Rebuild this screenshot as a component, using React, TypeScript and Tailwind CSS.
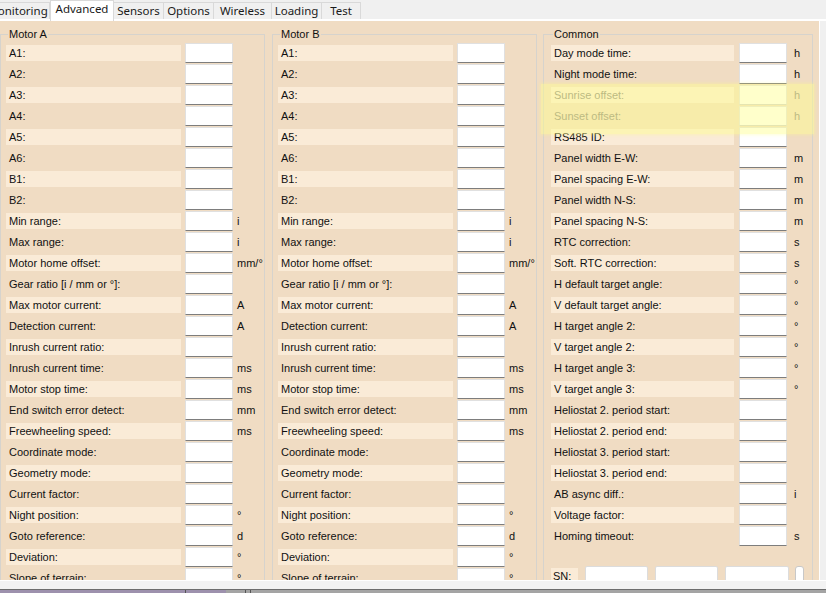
import React from 'react';

type Row = { label: string; unit?: string; disabled?: boolean };

const motorRows: Row[] = [
  { label: 'A1:' }, { label: 'A2:' }, { label: 'A3:' }, { label: 'A4:' },
  { label: 'A5:' }, { label: 'A6:' }, { label: 'B1:' }, { label: 'B2:' },
  { label: 'Min range:', unit: 'i' },
  { label: 'Max range:', unit: 'i' },
  { label: 'Motor home offset:', unit: 'mm/°' },
  { label: 'Gear ratio [i / mm or °]:' },
  { label: 'Max motor current:', unit: 'A' },
  { label: 'Detection current:', unit: 'A' },
  { label: 'Inrush current ratio:' },
  { label: 'Inrush current time:', unit: 'ms' },
  { label: 'Motor stop time:', unit: 'ms' },
  { label: 'End switch error detect:', unit: 'mm' },
  { label: 'Freewheeling speed:', unit: 'ms' },
  { label: 'Coordinate mode:' },
  { label: 'Geometry mode:' },
  { label: 'Current factor:' },
  { label: 'Night position:', unit: '°' },
  { label: 'Goto reference:', unit: 'd' },
  { label: 'Deviation:', unit: '°' },
  { label: 'Slope of terrain:', unit: '°' },
];

const commonRows: Row[] = [
  { label: 'Day mode time:', unit: 'h' },
  { label: 'Night mode time:', unit: 'h' },
  { label: 'Sunrise offset:', unit: 'h', disabled: true },
  { label: 'Sunset offset:', unit: 'h', disabled: true },
  { label: 'RS485 ID:' },
  { label: 'Panel width E-W:', unit: 'm' },
  { label: 'Panel spacing E-W:', unit: 'm' },
  { label: 'Panel width N-S:', unit: 'm' },
  { label: 'Panel spacing N-S:', unit: 'm' },
  { label: 'RTC correction:', unit: 's' },
  { label: 'Soft. RTC correction:', unit: 's' },
  { label: 'H default target angle:', unit: '°' },
  { label: 'V default target angle:', unit: '°' },
  { label: 'H target angle 2:', unit: '°' },
  { label: 'V target angle 2:', unit: '°' },
  { label: 'H target angle 3:', unit: '°' },
  { label: 'V target angle 3:', unit: '°' },
  { label: 'Heliostat 2. period start:' },
  { label: 'Heliostat 2. period end:' },
  { label: 'Heliostat 3. period start:' },
  { label: 'Heliostat 3. period end:' },
  { label: 'AB async diff.:', unit: 'i' },
  { label: 'Voltage factor:' },
  { label: 'Homing timeout:', unit: 's' },
];

const tabs = [
  { name: 'Monitoring', w: 'w-[64px]' },
  { name: 'Advanced', w: 'w-[64px]', active: true },
  { name: 'Sensors', w: 'w-[50px]' },
  { name: 'Options', w: 'w-[50px]' },
  { name: 'Wireless', w: 'w-[58px]' },
  { name: 'Loading', w: 'w-[50px]' },
  { name: 'Test', w: 'w-[39px]' },
];

const FieldRow = ({ row, index, wide }: { row: Row; index: number; wide?: boolean }) => (
  <div className="flex items-start h-[21px]">
    <div
      className={`mt-[2px] h-[16px] pl-[3px] leading-[16px] whitespace-nowrap ${wide ? 'w-[183px]' : 'w-[175px]'} ${
        index % 2 === 0 ? 'bg-[#faebd7]' : ''
      } ${row.disabled ? 'text-[#85827a]' : 'text-[#111]'}`}
    >
      {row.label}
    </div>
    <div
      className={`h-[20px] w-[48px] border ${wide ? 'ml-[5px]' : 'ml-[4px]'} ${
        row.disabled
          ? 'bg-white border-[#e2e2e2] border-b-[#cfcfcf]'
          : 'bg-white border-[#e0e0e0] border-b-[#7d7d7d]'
      }`}
    />
    {row.unit && (
      <span
        className={`leading-[20px] ${wide ? 'ml-[7px]' : 'ml-[4px]'} ${
          row.disabled ? 'text-[#85827a]' : 'text-[#111]'
        }`}
      >
        {row.unit}
      </span>
    )}
  </div>
);

const Group = ({
  title,
  rows,
  className,
  wide,
  children,
}: {
  title: string;
  rows: Row[];
  className: string;
  wide?: boolean;
  children?: React.ReactNode;
}) => (
  <fieldset className={`border border-[#d6d3cd] h-[620px] shrink-0 ${className}`}>
    <legend className={`px-[1px] leading-[13px] text-[#111] ${wide ? 'ml-[9px]' : 'ml-[7px]'}`}>{title}</legend>
    <div className={`flex flex-col mt-[2px] ${wide ? 'pl-[7px]' : 'pl-[5px]'}`}>
      {rows.map((r, i) => (
        <FieldRow key={r.label} row={r} index={i} wide={wide} />
      ))}
      {children}
    </div>
  </fieldset>
);

export default function App() {
  return (
    <div
      className="relative w-[826px] h-[593px] overflow-hidden bg-[#f0f0f0] text-[11px]"
      style={{ fontFamily: '"Liberation Sans", Arial, sans-serif' }}
    >
      {/* Tab strip */}
      <div
        className="flex h-[19px] ml-[-14px] text-[11.5px] text-[#1a1a1a]"
        style={{ fontFamily: '"Noto Sans", "Open Sans", sans-serif' }}
      >
        {tabs.map((t) =>
          t.active ? (
            <div
              key={t.name}
              className={`${t.w} h-[21px] bg-white border border-b-0 border-[#d9d9d9] flex items-start justify-center leading-[16px] z-10`}
            >
              {t.name}
            </div>
          ) : (
            <div
              key={t.name}
              className={`${t.w} mt-[2px] h-[17px] bg-[#f0f0f0] border border-b-0 border-l-0 border-[#d9d9d9] flex items-center justify-center leading-[16px]`}
            >
              {t.name}
            </div>
          )
        )}
      </div>
      <div className="h-[2px] bg-white" />

      {/* Tab page */}
      <div className="flex h-[559px]">
        <div className="w-[819px] h-full bg-[#f0dcc3] overflow-hidden flex items-start pt-[7px]">
          <Group title="Motor A" rows={motorRows} className="w-[265px]" />
          <Group title="Motor B" rows={motorRows} className="w-[265px] ml-[7px]" />
          <Group title="Common" rows={commonRows} className="w-[270px] ml-[6px]" wide>
            <div className="flex items-start mt-[19px] gap-[7px]">
              <div className="mt-[2px] h-[16px] w-[27px] pl-[2px] bg-[#faebd7] leading-[16px] text-[#111]">SN:</div>
              <div className="h-[20px] w-[63px] bg-white border border-[#dcdcdc] rounded-[2px]" />
              <div className="h-[20px] w-[63px] bg-white border border-[#dcdcdc] rounded-[2px]" />
              <div className="h-[20px] w-[64px] bg-white border border-[#dcdcdc] rounded-[2px]" />
              <div className="h-[20px] w-[9px] bg-white border border-[#c8c8c8] rounded-[3px] ml-[-1px]" />
            </div>
          </Group>
        </div>
        <div className="w-[1px] h-full bg-white" />
      </div>

      {/* Window bottom */}
      <div className="h-[9px] bg-[#f3f3f3] border-t border-white" />
      <div className="h-[1px] bg-[#6e6e6e]" />
      <div className="flex h-[3px]">
        <div className="w-[226px] bg-[#9d91ad] relative">
          <div className="absolute left-[185px] top-0 w-[1px] h-full bg-[#555]" />
        </div>
        <div className="flex-1 bg-[#a4a4a4] relative">
          <div className="absolute left-[19px] top-0 w-[1px] h-full bg-[#555]" />
          <div className="absolute left-[24px] top-0 w-[1px] h-full bg-[#555]" />
        </div>
      </div>

      {/* Highlight over sunrise / sunset offsets */}
      <div className="absolute left-[541px] top-[84px] w-[273px] h-[50px] bg-[#ffff8c]/45 shadow-[0_0_3px_1px_rgba(255,255,120,0.3)] pointer-events-none" />
    </div>
  );
}
